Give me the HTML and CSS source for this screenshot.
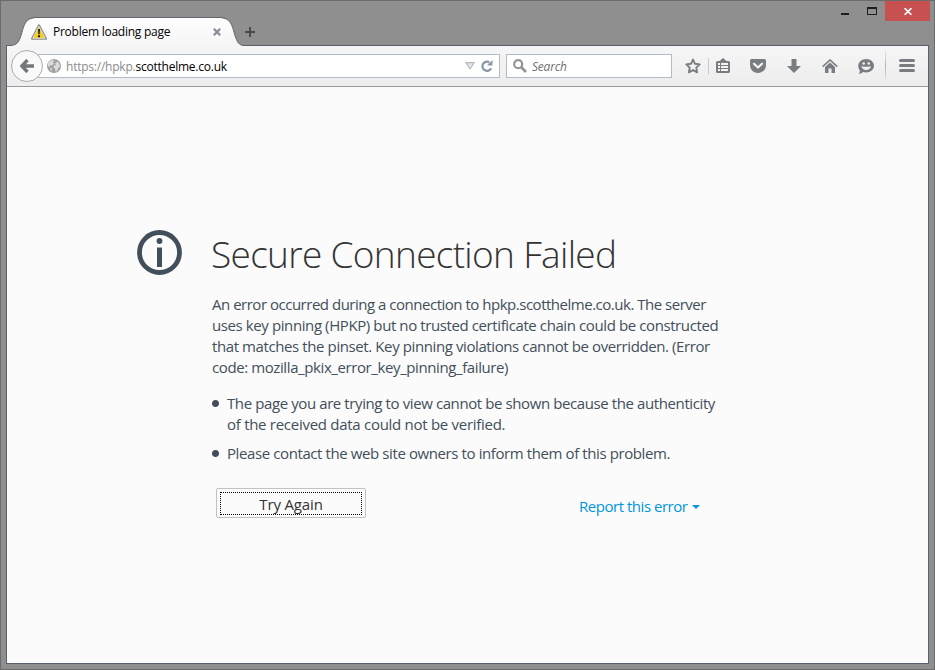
FILE: index.html
```html
<!DOCTYPE html>
<html lang="en">
<head>
    <meta charset="UTF-8">
    <title>Problem loading page</title>
    <link rel="stylesheet" href="styles.css">
</head>
<body>
    <div class="window">
        <!-- Title bar -->
        <div class="titlebar">
            <div class="tab">
                <svg class="tab-shape" width="238" height="30" viewBox="0 0 238 30">
                    <defs>
                        <linearGradient id="tabfill" x1="0" y1="0" x2="0" y2="1">
                            <stop offset="0" stop-color="#fefefe"/>
                            <stop offset="1" stop-color="#f5f5f5"/>
                        </linearGradient>
                    </defs>
                    <path d="M1 30V28.5H4C11 28.5 13 25 15.500 17C18 7 20 1.500 29 .9H215C224 1.500 226 7 228.500 17C231 25 233 28.500 238 28.500V30Z" fill="url(#tabfill)"/>
                    <path d="M0 28.500H4C11 28.500 13 25 15.500 17C18 7 20 1.500 29 .5H215C224 1.500 226 7 228.500 17C231 25 233 28.500 238 28.500" fill="none" stroke="#5d666f"/>
                </svg>
                <svg class="warning" width="16" height="16" viewBox="0 0 16 16">
                    <path d="M8 1.300L15 14.800H1Z" fill="#f5d22c" stroke="#8a8a8a" stroke-width="2" stroke-linejoin="round"/>
                    <path d="M8 2.200L14.200 14.300H1.800Z" fill="#f2cb1d" stroke="#e9e9e4" stroke-width=".8" stroke-linejoin="round"/>
                    <path d="M7 5H9L8.700 10.200H7.300ZM7 11.200H9V13.200H7Z" fill="#222"/>
                </svg>
                <span class="tab-title">Problem loading page</span>
                <svg class="tab-close" width="8" height="8" viewBox="0 0 8 8">
                    <path d="M.8 .8L7.200 7.200M7.200 .8L.8 7.200" stroke="#858b93" stroke-width="2.200"/>
                </svg>
            </div>
            <svg class="new-tab" width="10" height="10" viewBox="0 0 10 10">
                <path d="M5 0V10M0 5H10" stroke="#4a4a4a" stroke-width="2"/>
            </svg>
            <div class="controls">
                <svg class="minimize" width="8" height="2" viewBox="0 0 8 2"><rect width="8" height="2" fill="#1e1e1e"/></svg>
                <svg class="maximize" width="10" height="8" viewBox="0 0 10 8">
                    <path d="M0 0H10V8H0ZM1 2V7H9V2Z" fill="#1e1e1e" fill-rule="evenodd"/>
                </svg>
                <div class="close">
                    <svg width="8" height="7" viewBox="0 0 8 7"><path d="M.6 .2L7.400 6.800M7.400 .2L.6 6.800" stroke="#fff" stroke-width="1.700"/></svg>
                </div>
            </div>
        </div>

        <div class="frame">
            <!-- Toolbar -->
            <div class="toolbar">
                <div class="back">
                    <svg width="14" height="14" viewBox="0 0 14 14">
                        <path d="M7.500 1L1.800 7L7.500 13M2 7H14" fill="none" stroke="#73777b" stroke-width="3.400"/>
                    </svg>
                </div>
                <div class="urlbar">
                    <svg width="14" height="14" viewBox="0 0 14 14">
                        <circle cx="7" cy="7" r="7" fill="#a0a0a0"/>
                        <path d="M1 4L4 1.300L7.500 1.200L6 3.300L7 5L4.500 6.500L3 6L2.500 8L1 7ZM8 4.500L10.500 2.500L12.500 5L12.800 8L11 9L10.500 11.500L8.500 12.800L8 9.500L6.500 8.500L7 6.500L9.500 6ZM3 9L5 9.500L5 12L3.500 11Z" fill="#dcdcdc"/>
                    </svg>
                    <span class="url"><span class="url-dim">https://hpkp.</span>scotthelme.co.uk</span>
                    <svg class="dropdown" width="10" height="8" viewBox="0 0 10 8">
                        <path d="M.7 .7H9.300L5 7Z" fill="#dfe3e8" stroke="#a4adb7"/>
                    </svg>
                    <svg class="reload" width="12" height="12" viewBox="0 0 12 12">
                        <path d="M10.200 8.300A4.600 4.600 0 1 1 8.300 2.200" fill="none" stroke="#8a97a6" stroke-width="2.200"/>
                        <path d="M11.500 0V5.600H6L8 3.300L9.300 2.200Z" fill="#8a97a6"/>
                    </svg>
                </div>
                <div class="searchbar">
                    <svg width="14" height="14" viewBox="0 0 14 14">
                        <circle cx="5.200" cy="5.200" r="4" fill="none" stroke="#949494" stroke-width="2.200"/>
                        <path d="M8 8L13 13" stroke="#949494" stroke-width="2.600"/>
                    </svg>
                    <span class="search-text">Search</span>
                </div>
                <div class="icons">
                    <svg width="16" height="16" viewBox="0 0 16 16">
                        <path d="M8 1.600L10 5.800L14.700 6.400L11.300 9.600L12.100 14.300L8 12L3.900 14.300L4.700 9.600L1.300 6.400L6 5.800Z" fill="none" stroke="#797c80" stroke-width="1.900" stroke-linejoin="round"/>
                    </svg>
                    <div class="divider"></div>
                    <svg class="bookmarks" width="14" height="16" viewBox="0 0 14 16">
                        <path d="M3.500 3L7 0L10.500 3H12.500Q14 3 14 4.500V13.500Q14 15 12.500 15H1.500Q0 15 0 13.500V4.500Q0 3 1.500 3Z" fill="#797c80"/>
                        <path d="M2 5H4V7H2ZM5 5H12V7H5ZM2 8H4V10H2ZM5 8H12V10H5ZM2 11H4V13H2ZM5 11H12V13H5Z" fill="#f3f3f3"/>
                    </svg>
                    <svg class="pocket" width="16" height="14" viewBox="0 0 16 14">
                        <path d="M1.500 0H14.500Q16 0 16 1.500V6C16 11 12 14 8 14S0 11 0 6V1.500Q0 0 1.500 0Z" fill="#797c80"/>
                        <path d="M4 4.700L8 8.500L12 4.700" fill="none" stroke="#f5f5f5" stroke-width="2.200" stroke-linecap="round" stroke-linejoin="round"/>
                    </svg>
                    <svg class="download" width="14" height="14" viewBox="0 0 14 14">
                        <path d="M4.500 0H9.500V7H14L7 14L0 7H4.500Z" fill="#797c80"/>
                    </svg>
                    <svg class="home" width="16" height="14" viewBox="0 0 16 14">
                        <path d="M.7 7.600L8 1L15.300 7.600" fill="none" stroke="#797c80" stroke-width="1.600"/>
                        <path d="M3 8L8 3.600L13 8V14H9.500V9.500H6.500V14H3Z" fill="#797c80"/>
                    </svg>
                    <svg class="hello" width="16" height="15" viewBox="0 0 16 15">
                        <path d="M8.200 0C12.500 0 16 2.900 16 6.800S12.500 13.500 8.200 13.500C7 13.500 6 13.300 5 13C4 14.200 2.500 14.800 .7 14.800C1.600 13.800 1.900 12.700 1.800 11.200C.7 10 .3 8.500 .3 6.800C.3 2.900 3.900 0 8.200 0Z" fill="#797c80"/>
                        <circle cx="5.700" cy="4.500" r="1.200" fill="#f3f3f3"/>
                        <circle cx="10.700" cy="4.500" r="1.200" fill="#f3f3f3"/>
                        <path d="M3.300 7.300Q8.200 8.300 13.100 7.300Q12 11 8.200 11T3.300 7.300Z" fill="#f3f3f3"/>
                    </svg>
                    <div class="menu-divider"></div>
                    <svg class="menu" width="16" height="14" viewBox="0 0 16 14">
                        <path d="M1.500 1.500H14.500M1.500 6.500H14.500M1.500 11.500H14.500" stroke="#797c80" stroke-width="3" stroke-linecap="round"/>
                    </svg>
                </div>
            </div>

            <!-- Error page -->
            <div class="page">
                <svg class="info" width="46" height="46" viewBox="0 0 46 46">
                    <circle cx="22.500" cy="22.500" r="20" fill="none" stroke="#424f5a" stroke-width="4.800"/>
                    <circle cx="22.500" cy="11" r="2.900" fill="#424f5a"/>
                    <rect x="20" y="17.500" width="5" height="19.500" fill="#424f5a"/>
                </svg>
                <div class="message">
                    <h1>Secure Connection Failed</h1>
                    <p>
                        <span class="line tight">An error occurred during a connection to hpkp.scotthelme.co.uk. The server</span>
                        <span class="line">uses key pinning (HPKP) but no trusted certificate chain could be constructed</span>
                        <span class="line">that matches the pinset. Key pinning violations cannot be overridden. (Error</span>
                        <span class="line">code: mozilla_pkix_error_key_pinning_failure)</span>
                    </p>
                    <ul>
                        <li>
                            <span class="line">The page you are trying to view cannot be shown because the authenticity</span>
                            <span class="line loose">of the received data could not be verified.</span>
                        </li>
                        <li><span class="line">Please contact the web site owners to inform them of this problem.</span></li>
                    </ul>
                    <div class="actions">
                        <button class="retry"><span>Try Again</span></button>
                        <a class="report">Report this error</a>
                    </div>
                </div>
            </div>
        </div>
    </div>
</body>
</html>
```

FILE: styles.css
```css
* {
    box-sizing: border-box;
}
body {
    margin: 0;
    font-family: "Open Sans", "Noto Sans", sans-serif;
}
svg {
    display: block;
    flex: none;
}
.window {
    height: 670px;
    padding: 0 5px 5px;
    border: 1px solid #6b6b6b;
    background: #8f8f8f;
    display: flex;
    flex-direction: column;
}

/* title bar */
.titlebar {
    height: 44px;
    display: flex;
    align-items: flex-start;
}
.tab {
    position: relative;
    z-index: 1;
    width: 238px;
    height: 30px;
    margin-top: 16px;
    padding: 0 23px 0 25px;
    display: flex;
    align-items: center;
}
.tab-shape {
    position: absolute;
    left: 0;
    top: 0;
}
.warning,
.tab-title,
.tab-close {
    position: relative;
}
.tab-title {
    margin-left: 6px;
    padding-bottom: 1px;
    font-size: 12px;
    letter-spacing: -0.25px;
    white-space: nowrap;
    color: #000;
}
.tab-close {
    margin-left: auto;
}
.new-tab {
    margin: 26px 0 0 1px;
}
.controls {
    margin-left: auto;
    display: flex;
}
.minimize {
    margin: 12px 18px 0 0;
}
.maximize {
    margin: 6px 8px 0 0;
}
.close {
    width: 45px;
    height: 20px;
    margin-right: -1px;
    background: #c75050;
    display: flex;
    align-items: center;
    justify-content: center;
}

.frame {
    flex: 1;
    border: 1px solid #57616b;
    background: #fbfbfb;
}

/* toolbar */
.toolbar {
    height: 41px;
    padding-left: 4px;
    border-bottom: 1px solid #989a9d;
    background: linear-gradient(#f6f6f6, #ededed);
    display: flex;
    align-items: center;
}
.back {
    z-index: 1;
    width: 32px;
    height: 32px;
    border: 1px solid #a9abae;
    border-radius: 50%;
    background: #f9f9f9;
    display: flex;
    align-items: center;
    justify-content: center;
}
.urlbar,
.searchbar {
    height: 24px;
    border: 1px solid #b3bcc6;
    background: #fff;
    display: flex;
    align-items: center;
}
.urlbar {
    width: 462px;
    margin-left: -5px;
    padding: 0 6px 0 8px;
}
.url {
    margin-left: 5px;
    font-size: 12px;
    letter-spacing: -0.23px;
    color: #000;
}
.url-dim {
    color: #8c8c8c;
}
.dropdown {
    margin-left: auto;
}
.reload {
    margin-left: 6px;
}
.searchbar {
    width: 166px;
    margin-left: 6px;
    padding-left: 6px;
}
.search-text {
    margin-left: 5px;
    font-size: 12px;
    font-style: italic;
    letter-spacing: -0.2px;
    color: #6f6f6f;
}
.icons {
    margin-left: 13px;
    display: flex;
    align-items: center;
}
.divider {
    width: 1px;
    height: 16px;
    margin: 0 7px;
    background: #c3cad2;
}
.pocket {
    margin-left: 20px;
}
.download {
    margin-left: 21px;
}
.home {
    margin-left: 21px;
}
.hello {
    margin-left: 20px;
}
.menu-divider {
    width: 1px;
    height: 36px;
    margin: 0 13px 0 11px;
    background: linear-gradient(#f3f3f3, #a9b3be 50%, #efefef);
}

/* error page */
.page {
    padding: 143px 0 0 130px;
    display: flex;
    align-items: flex-start;
}
.message {
    width: 520px;
    margin-left: 29px;
    font-size: 15px;
    line-height: 21px;
    color: #424f5a;
}
h1 {
    margin: 0 0 0 -1px;
    font-size: 37px;
    font-weight: 300;
    line-height: 48px;
    letter-spacing: -0.68px;
    white-space: nowrap;
    color: #333;
}
p {
    margin: 16px 0 15px;
}
.line {
    display: block;
    white-space: nowrap;
    letter-spacing: -0.4px;
}
.line.tight {
    letter-spacing: -0.485px;
}
.line.loose {
    letter-spacing: -0.28px;
}
ul {
    margin: 0;
    padding: 0;
    list-style: none;
}
li {
    padding-left: 15px;
    margin-bottom: 8px;
    background: radial-gradient(circle at 3.500px 10.500px, #424f5a 3px, transparent 4px);
}
.actions {
    padding-left: 4px;
    margin-top: 24px;
    display: flex;
    align-items: flex-start;
}
.retry {
    width: 150px;
    height: 30px;
    padding: 3px;
    border: 1px solid #c1c1c1;
    border-radius: 2px;
    background: #fbfbfb;
    font: 15px/25px "Open Sans", "Noto Sans", sans-serif;
    letter-spacing: -0.15px;
    color: #333;
}
.retry span {
    display: block;
    height: 23px;
    outline: 1px dotted #000;
    outline-offset: -1px;
}
.report {
    margin: 8px 0 0 213px;
    display: flex;
    align-items: center;
    gap: 5px;
    white-space: nowrap;
    letter-spacing: -0.47px;
    color: #0095dd;
}
.report::after {
    content: "";
    border: 4px solid transparent;
    border-top-color: #0095dd;
    border-bottom: 0;
}
```
